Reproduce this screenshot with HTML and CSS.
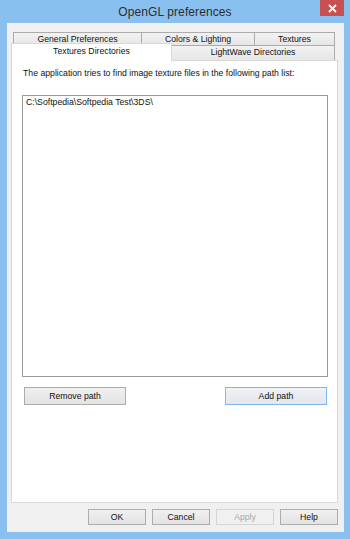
FILE: index.html
```
<!DOCTYPE html>
<html lang="en">
<head>
    <meta charset="UTF-8">
    <meta name="viewport" content="width=device-width, initial-scale=1.0">
    <title>OpenGL preferences</title>
    <link rel="stylesheet" href="styles.css">
</head>
<body>
    <div class="window">
        <div class="titlebar">
            <span></span>
            <span class="title">OpenGL preferences</span>
            <span class="close">
                <svg width="9" height="9" viewBox="0 0 9 9"><path d="M1 1L8 8M8 1L1 8" stroke="#fff" stroke-width="1.8"/></svg>
            </span>
        </div>

        <div class="client">
            <div class="tabs">
                <div class="tabrow back">
                    <div class="tab tab-general">General Preferences</div>
                    <div class="tab tab-colors">Colors &amp; Lighting</div>
                    <div class="tab tab-textures">Textures</div>
                </div>
                <div class="tabrow front">
                    <div class="tab tab-dirs selected">Textures Directories</div>
                    <div class="tab tab-lightwave">LightWave Directories</div>
                </div>
            </div>

            <div class="panel">
                <p class="intro">The application tries to find image texture files in the following path list:</p>
                <div class="listbox">
                    <div class="item">C:\Softpedia\Softpedia Test\3DS\</div>
                </div>
                <div class="path-buttons">
                    <button type="button" class="btn btn-path">Remove path</button>
                    <button type="button" class="btn btn-path focused">Add path</button>
                </div>
            </div>

            <div class="footer">
                <button type="button" class="btn">OK</button>
                <button type="button" class="btn">Cancel</button>
                <button type="button" class="btn" disabled>Apply</button>
                <button type="button" class="btn">Help</button>
            </div>
        </div>
    </div>
</body>
</html>
```

FILE: styles.css
```
html, body {
    margin: 0;
    padding: 0;
}
body {
    width: 350px;
    height: 539px;
    background-color: #8ac0ef; /* window frame */
    font-family: "Liberation Sans", Arial, sans-serif;
    font-size: 8.7px;
    color: #111;
}
.window {
    height: 100%;
    display: flex;
    flex-direction: column;
}
.titlebar {
    height: 23px;
    display: grid;
    grid-template-columns: 1fr auto 1fr;
    align-items: start;
}
.title {
    font-size: 12px;
    color: #2e2e2e;
    padding-top: 5px;
    letter-spacing: 0.1px;
}
.close {
    justify-self: end;
    width: 24px;
    height: 16px;
    margin-right: 6px;
    background-color: #c75050;
    display: flex;
    align-items: center;
    justify-content: center;
}
.client {
    flex: 1;
    margin: 0 6px 7px 7px;
    padding: 9px 6px 7px 4px;
    background-color: #f0f0f0;
    display: flex;
    flex-direction: column;
}

/* tabs */
.tabs {
    display: flex;
    flex-direction: column;
}
.tabrow {
    display: flex;
    margin: 0 3px 0 2px;
}
.tab {
    box-sizing: border-box;
    border: 1px solid #acacac;
    border-bottom: none;
    background: linear-gradient(#f2f2f2, #e6e6e6);
    text-align: center;
    white-space: nowrap;
}
.tab + .tab {
    margin-left: -1px;
}
.back .tab {
    height: 13px;
    line-height: 12px;
}
.tab-general { width: 129px; }
.tab-colors { width: 114px; }
.tab-textures { flex: 1; }
.front {
    margin-left: 0;
    align-items: flex-end;
}
.front .tab {
    height: 15px;
    line-height: 13px;
}
.tab-dirs {
    width: 161px;
}
.tab-lightwave {
    flex: 1;
}
.tab.selected {
    position: relative;
    z-index: 1;
    height: 18px;
    margin-top: -2px;
    margin-bottom: -1px;
    line-height: 14px;
    background: #fff;
    border-color: #d9d9d9;
}

/* panel */
.panel {
    flex: 1;
    border: 1px solid #d9d9d9;
    background-color: #fff;
    padding: 7px 9px 0 10px;
}
.intro {
    margin: 0 0 0 1px;
    line-height: 11px;
}
.listbox {
    box-sizing: border-box;
    height: 282px;
    margin-top: 16px;
    border: 1px solid #9a9a9a;
    background-color: #fff;
    padding: 1px 3px;
}
.item {
    line-height: 11px;
}
.path-buttons {
    display: flex;
    justify-content: space-between;
    margin-top: 10px;
    padding: 0 1px 0 2px;
}

/* buttons */
.btn {
    box-sizing: border-box;
    font-family: inherit;
    font-size: 8.7px;
    color: #111;
    border: 1px solid #acacac;
    background: linear-gradient(#f0f0f0, #e3e3e3);
    padding: 0;
    margin: 0;
}
.btn-path {
    width: 102px;
    height: 18px;
}
.btn.focused {
    border-color: #7db7ed;
    background: linear-gradient(#eef3f8, #e3e6ea);
}
.btn:disabled {
    color: #a8a8a8;
    border-color: #d5d5d5;
    background: #f0f0f0;
}
.footer {
    display: flex;
    justify-content: flex-end;
    gap: 6px;
    margin-top: 6px;
}
.footer .btn {
    width: 58px;
    height: 16px;
}
```
